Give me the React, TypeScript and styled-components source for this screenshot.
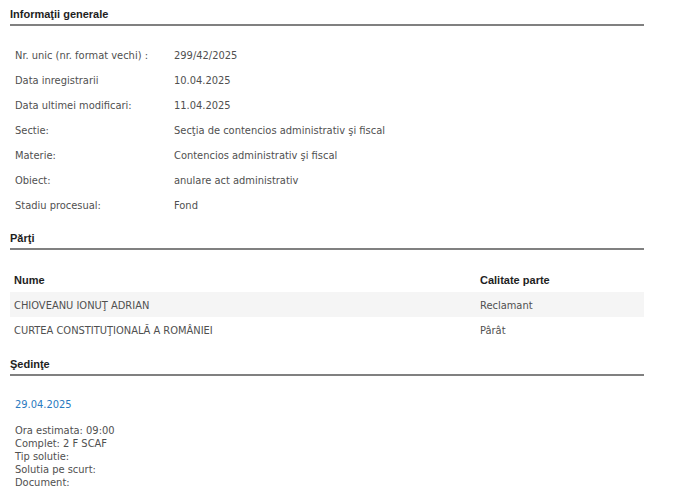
import React from 'react';
import styled, { createGlobalStyle } from 'styled-components';

const GlobalStyle = createGlobalStyle`
  body {
    margin: 0;
    background: #ffffff;
    font-family: 'DejaVu Sans Condensed', 'DejaVu Sans', sans-serif;
  }
`;

const Page = styled.div`
  width: 634px;
  padding: 6px 0 0 10px;
  color: #505050;
  font-size: 11px;
`;

const SectionTitle = styled.h3`
  margin: 0;
  padding: 0 0 2px 0;
  font-family: 'Liberation Sans', Arial, sans-serif;
  font-size: 11px;
  line-height: 16px;
  font-weight: bold;
  color: #1e1e1e;
  border-bottom: 2px solid #808080;
`;

const InfoList = styled.div`
  display: flex;
  flex-direction: column;
  padding: 17px 0 12px 5px;
`;

const InfoRow = styled.div`
  display: grid;
  grid-template-columns: 159px 1fr;
  height: 25px;
  line-height: 25px;
`;

const PartyTable = styled.div`
  display: flex;
  flex-direction: column;
  padding: 16px 0 14px 0;
`;

interface PartyRowProps {
  $header?: boolean;
  $shaded?: boolean;
}

const PartyRow = styled.div<PartyRowProps>`
  display: grid;
  grid-template-columns: 466px 1fr;
  box-sizing: border-box;
  padding: 3px 0 0 4px;
  height: 25px;
  line-height: 22px;
  background: ${(props) => (props.$shaded ? '#f5f5f5' : 'transparent')};
  color: ${(props) => (props.$header ? '#1e1e1e' : '#505050')};
  font-family: ${(props) =>
    props.$header ? "'Liberation Sans', Arial, sans-serif" : 'inherit'};
  font-weight: ${(props) => (props.$header ? 'bold' : 'normal')};
  margin-bottom: ${(props) => (props.$header ? '1px' : '0')};
`;

const Hearing = styled.div`
  padding: 22px 0 0 5px;
`;

const HearingDate = styled.div`
  color: #2a7ac0;
  line-height: 14px;
  margin-bottom: 12px;
`;

const HearingLine = styled.div`
  line-height: 13px;
`;

const info = [
  ['Nr. unic (nr. format vechi) :', '299/42/2025'],
  ['Data inregistrarii', '10.04.2025'],
  ['Data ultimei modificari:', '11.04.2025'],
  ['Sectie:', 'Secţia de contencios administrativ şi fiscal'],
  ['Materie:', 'Contencios administrativ şi fiscal'],
  ['Obiect:', 'anulare act administrativ'],
  ['Stadiu procesual:', 'Fond'],
];

const parties = [
  ['CHIOVEANU IONUŢ ADRIAN', 'Reclamant'],
  ['CURTEA CONSTITUŢIONALĂ A ROMÂNIEI', 'Pârât'],
];

const hearingLines = [
  'Ora estimata: 09:00',
  'Complet: 2 F SCAF',
  'Tip solutie:',
  'Solutia pe scurt:',
  'Document:',
];

export default function App() {
  return (
    <Page>
      <GlobalStyle />
      <SectionTitle>Informaţii generale</SectionTitle>
      <InfoList>
        {info.map(([label, value]) => (
          <InfoRow key={label}>
            <span>{label}</span>
            <span>{value}</span>
          </InfoRow>
        ))}
      </InfoList>

      <SectionTitle>Părţi</SectionTitle>
      <PartyTable>
        <PartyRow $header>
          <span>Nume</span>
          <span>Calitate parte</span>
        </PartyRow>
        {parties.map(([name, role], i) => (
          <PartyRow key={name} $shaded={i % 2 === 0}>
            <span>{name}</span>
            <span>{role}</span>
          </PartyRow>
        ))}
      </PartyTable>

      <SectionTitle>Şedinţe</SectionTitle>
      <Hearing>
        <HearingDate>29.04.2025</HearingDate>
        {hearingLines.map((line) => (
          <HearingLine key={line}>{line}</HearingLine>
        ))}
      </Hearing>
    </Page>
  );
}
